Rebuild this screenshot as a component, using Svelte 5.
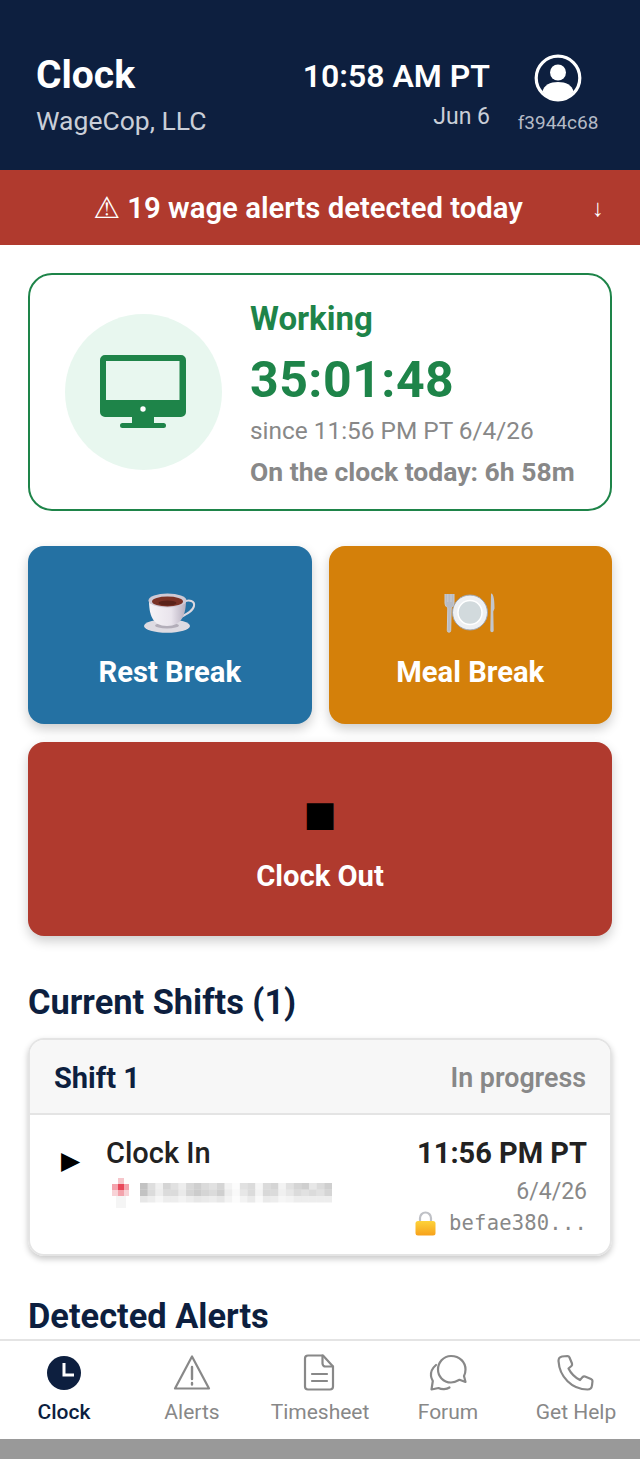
<script>
    const navItems = [
        { label: 'Clock', icon: 'clock', active: true },
        { label: 'Alerts', icon: 'alert' },
        { label: 'Timesheet', icon: 'sheet' },
        { label: 'Forum', icon: 'forum' },
        { label: 'Get Help', icon: 'phone' }
    ];

    // redacted coordinates, drawn as mosaic cells
    const blurShades = [
        [1, 0.55, 0.25, 0.7, 0.5, 0.3, 0.65, 0.8, 0.6, 0.5, 0.7, 0.2, 0.05, 0.5, 0.6, 0.15, 0.6, 0.7, 0.2, 0.5, 0.7, 0.8, 0.4, 0.6, 0.8],
        [1, 0.6, 0.3, 0.6, 0.6, 0.35, 0.7, 0.85, 0.7, 0.6, 0.8, 0.3, 0.1, 0.4, 0.6, 0.2, 0.65, 0.6, 0.25, 0.4, 0.6, 0.5, 0.6, 0.5, 0.7],
        [0.4, 0.3, 0.15, 0.3, 0.3, 0.2, 0.3, 0.4, 0.35, 0.3, 0.4, 0.2, 0.05, 0.2, 0.35, 0.1, 0.35, 0.3, 0.15, 0.2, 0.3, 0.3, 0.3, 0.3, 0.3]
    ];
</script>

<div class="page">
    <header class="topbar">
        <div class="title-block">
            <h1>Clock</h1>
            <p>WageCop, LLC</p>
        </div>
        <div class="time-block">
            <div class="time">10:58 AM PT</div>
            <div class="date">Jun 6</div>
        </div>
        <div class="user-block">
            <svg width="48" height="48" viewBox="0 0 48 48">
                <circle cx="24" cy="24" r="21.8" fill="none" stroke="#fff" stroke-width="3.2" />
                <circle cx="24" cy="18.5" r="8" fill="#fff" />
                <path d="M8.5 37.5C10 31 16 28 24 28s14 3 15.5 9.5A21.5 21.5 0 0 1 24 45.5a21.5 21.5 0 0 1-15.5-8z" fill="#fff" />
            </svg>
            <span>f3944c68</span>
        </div>
    </header>

    <div class="alert-bar">
        <span class="alert-text"><span class="alert-glyph">⚠</span> 19 wage alerts detected today</span>
        <span class="alert-arrow">↓</span>
    </div>

    <main>
        <section class="status-card">
            <div class="status-icon">
                <svg width="86" height="74" viewBox="0 0 86 74">
                    <path fill="#1e8449" fill-rule="evenodd" d="M5 0h76a5 5 0 0 1 5 5v52a5 5 0 0 1-5 5H54v6h9.500a2.500 2.500 0 0 1 0 5h-41a2.500 2.500 0 0 1 0-5H32v-6H5a5 5 0 0 1-5-5V5a5 5 0 0 1 5-5zM6 6v39h73.500V6z" />
                    <circle cx="43" cy="54" r="2.700" fill="#fff" />
                </svg>
            </div>
            <div class="status-text">
                <div class="status-label">Working</div>
                <div class="status-timer">35:01:48</div>
                <div class="status-since">since 11:56 PM PT 6/4/26</div>
                <div class="status-today">On the clock today: 6h 58m</div>
            </div>
        </section>

        <div class="break-row">
            <button class="action rest">
                <svg width="52" height="40" viewBox="0 0 52 40">
                    <defs>
                        <linearGradient id="cupBody" x1="0" x2="1" y1="0" y2="0">
                            <stop offset="0" stop-color="#f6f4f7" />
                            <stop offset="0.6" stop-color="#e9e4ec" />
                            <stop offset="1" stop-color="#b5adbd" />
                        </linearGradient>
                    </defs>
                    <ellipse cx="23" cy="33" rx="23" ry="6.800" fill="#dedbe2" />
                    <ellipse cx="23" cy="32.500" rx="12" ry="3" fill="#b3aeb9" />
                    <path d="M40 9c5-3 11-1 10 4-1 5-7 8-13 11" fill="none" stroke="#dcd8e0" stroke-width="2" />
                    <path d="M5 7c0 14 3 26 18 26s19-12 19-26z" fill="url(#cupBody)" />
                    <ellipse cx="23.500" cy="7.500" rx="19" ry="7" fill="#cfc9d4" />
                    <ellipse cx="23.500" cy="8.500" rx="15.500" ry="5" fill="#7a3226" />
                    <ellipse cx="23.500" cy="10" rx="9" ry="2.500" fill="#5a2219" />
                </svg>
                <span>Rest Break</span>
            </button>
            <button class="action meal">
                <svg width="52" height="40" viewBox="0 0 52 40">
                    <path d="M1 1v9c0 3 1.800 4 2.800 5l-.5 22.500a1.700 1.700 0 0 0 3.400 0L7.200 15c1-1 2.800-2 2.800-5V1M3.800 1v8M7 1v8" fill="#b9bcc4" stroke="#c9ccd3" stroke-width="1" />
                    <circle cx="26" cy="19.500" r="17.500" fill="#eef0f3" stroke="#9ea3ad" stroke-width="1" />
                    <circle cx="26" cy="19.500" r="12" fill="#d2dadd" stroke="#fff" stroke-width="1.500" />
                    <path d="M47 .5c3 0 3.500 8 3.500 15l-1.200 3 .4 19a1.700 1.700 0 0 1-3.400 0z" fill="#c3c6cd" />
                </svg>
                <span>Meal Break</span>
            </button>
        </div>

        <button class="action clock-out">
            <span class="stop">■</span>
            <span>Clock Out</span>
        </button>

        <h2>Current Shifts (1)</h2>
        <section class="shift-card">
            <div class="shift-head">
                <strong>Shift 1</strong>
                <span>In progress</span>
            </div>
            <div class="shift-row">
                <span class="play">▶</span>
                <div class="shift-left">
                    <div class="event">Clock In</div>
                    <svg class="mosaic" width="228" height="34" viewBox="0 0 228 34">
                        <rect x="12" y="0" width="6" height="6" fill="#f6c6cb" />
                        <rect x="6" y="6" width="17" height="6" fill="#f4a3ad" />
                        <rect x="12" y="6" width="6" height="6" fill="#e9485a" />
                        <rect x="6" y="12" width="17" height="6" fill="#f8d3d7" />
                        <rect x="12" y="12" width="6" height="6" fill="#f3a3ac" />
                        <rect x="10" y="18" width="10" height="12" fill="#f5f5f5" />
                        {#each blurShades as row, r}
                            {#each row as shade, c}
                                <rect x={34 + c * 7.680} y={5 + r * 6.500} width="7.680" height="6.500" fill="#9a9a9a" fill-opacity={shade * 0.6} />
                            {/each}
                        {/each}
                    </svg>
                </div>
                <div class="shift-right">
                    <div class="event-time">11:56 PM PT</div>
                    <div class="event-date">6/4/26</div>
                    <div class="event-hash">
                        <svg width="21" height="25" viewBox="0 0 21 25">
                            <defs>
                                <linearGradient id="lockBody" x1="0" x2="0" y1="0" y2="1">
                                    <stop offset="0" stop-color="#fdd33a" />
                                    <stop offset="1" stop-color="#f7a11b" />
                                </linearGradient>
                            </defs>
                            <path d="M5 11V7a5.500 5.500 0 0 1 11 0v4" fill="none" stroke="#bfc1c6" stroke-width="2.200" />
                            <rect x="0.500" y="10" width="20" height="14.500" rx="2.500" fill="url(#lockBody)" />
                        </svg>
                        <span>befae380...</span>
                    </div>
                </div>
            </div>
        </section>

        <h2 class="alerts-title">Detected Alerts</h2>
    </main>

    <nav class="bottom-nav">
        {#each navItems as item}
            <div class="nav-item" class:active={item.active}>
                <svg width="38" height="38" viewBox="0 0 38 38" fill="none" stroke="#888" stroke-width="2.200" stroke-linecap="round" stroke-linejoin="round">
                    {#if item.icon === 'clock'}
                        <circle cx="19" cy="19" r="17" fill="#0d1f3f" stroke="none" />
                        <path d="M19 9v12h10" stroke="#fff" stroke-width="3" stroke-linecap="butt" stroke-linejoin="miter" />
                    {:else if item.icon === 'alert'}
                        <path d="M19 2.500 2 34.500h34z" stroke-width="2.200" />
                        <path d="M19 13v12M19 29v1.500" stroke-width="2.400" />
                    {:else if item.icon === 'sheet'}
                        <path d="M7 1.500h15l10 11v20a3 3 0 0 1-3 3H7a3 3 0 0 1-3-3v-28a3 3 0 0 1 3-3z" />
                        <path d="M21.500 1.500v8a3 3 0 0 0 3 3H32M11 20h15M11 27h15" />
                    {:else if item.icon === 'forum'}
                        <path d="M22 2c9 0 14.500 6.500 14.500 13.500 0 3-.7 5-1.500 6.500l1.500 6-6-2.200C28 27.200 25.500 28.500 22 28.500 14 28.500 9 22 9 15.500S14 2 22 2z" />
                        <path d="M7 11c-3.500 3-5.500 6.500-5 11 .2 2 1 3.500 1.800 5L2.500 35.500l7-1.500c3 1.500 8 1.500 11-.5" />
                    {:else}
                        <path d="M5 2.500 10.500 2c1 0 1.600.5 2 1.500l2.500 6c.3 1 .1 1.800-.6 2.500l-2.900 2.500c2.500 5 6.500 9 11.500 11.500l2.500-2.900c.7-.7 1.500-.9 2.500-.6l6 2.500c1 .4 1.500 1 1.500 2l-.5 4.500c-.3 2.500-2 4-4.500 4C15 35.500 2.500 23 1.500 7c0-2.500 1-4 3.500-4.500z" />
                    {/if}
                </svg>
                <span>{item.label}</span>
            </div>
        {/each}
    </nav>
    <div class="system-bar"></div>
</div>

<style>
    :global(body) {
        margin: 0;
        background: #fff;
    }

    .page {
        height: 1459px;
        display: flex;
        flex-direction: column;
        overflow: hidden;
        font-family: Roboto, "Liberation Sans", sans-serif;
        color: #222;
    }

    .topbar {
        height: 170px;
        box-sizing: border-box;
        flex-shrink: 0;
        display: flex;
        align-items: flex-start;
        background: #0d1f3f;
        color: #fff;
        padding: 52px 42px 0 36px;
    }

    .title-block {
        flex: 1;
    }

    h1 {
        margin: 0;
        font-size: 39px;
        line-height: 46px;
        font-weight: 700;
    }

    .title-block p {
        margin: 6px 0 0;
        font-size: 26.500px;
        line-height: 34px;
        color: #c9ced8;
    }

    .time-block {
        text-align: right;
        margin-right: 28px;
    }

    .time {
        margin-top: 5px;
        font-size: 32px;
        line-height: 38px;
        font-weight: 600;
    }

    .date {
        margin-top: 7px;
        font-size: 23px;
        line-height: 30px;
        color: #c9ced8;
    }

    .user-block {
        width: 80px;
        margin-top: 2px;
        display: flex;
        flex-direction: column;
        align-items: center;
    }

    .user-block span {
        margin-top: 9px;
        font-size: 19px;
        line-height: 24px;
        color: #b4bac6;
    }

    .alert-bar {
        height: 75px;
        box-sizing: border-box;
        padding-right: 24px;
        flex-shrink: 0;
        position: relative;
        display: flex;
        align-items: center;
        justify-content: center;
        background: #b03a2e;
        color: #fff;
    }

    .alert-text {
        font-size: 29.300px;
        font-weight: 600;
    }

    .alert-glyph {
        font-family: "DejaVu Sans", sans-serif;
        font-size: 30px;
        font-weight: 400;
    }

    .alert-arrow {
        position: absolute;
        right: 36px;
        font-size: 24px;
    }

    main {
        flex: 1;
        min-height: 0;
        overflow: hidden;
        padding: 28px 28px 0;
    }

    .status-card {
        height: 238px;
        box-sizing: border-box;
        display: flex;
        align-items: center;
        border: 2px solid #1e8449;
        border-radius: 24px;
        padding: 0 0 0 35px;
    }

    .status-icon {
        width: 157px;
        height: 156px;
        flex-shrink: 0;
        margin-right: 28px;
        border-radius: 50%;
        background: #e8f7ef;
        display: flex;
        align-items: center;
        justify-content: center;
    }

    .status-icon svg {
        margin-right: 2px;
    }

    .status-text {
        padding-top: 3px;
    }

    .status-label {
        font-size: 33px;
        line-height: 38px;
        font-weight: 700;
        color: #1e8449;
    }

    .status-timer {
        margin-top: 13px;
        font-size: 50px;
        line-height: 58px;
        font-weight: 700;
        letter-spacing: 0.500px;
        color: #1e8449;
    }

    .status-since {
        margin-top: 6px;
        font-size: 24.400px;
        line-height: 32px;
        color: #888;
    }

    .status-today {
        margin-top: 9px;
        font-size: 26.500px;
        line-height: 32px;
        font-weight: 700;
        color: #888;
    }

    .break-row {
        display: flex;
        gap: 17px;
        margin-top: 35px;
    }

    .action {
        box-sizing: border-box;
        border: none;
        border-radius: 16px;
        padding: 11px 0 0;
        display: flex;
        flex-direction: column;
        align-items: center;
        justify-content: center;
        color: #fff;
        font-family: inherit;
        font-size: 29.200px;
        font-weight: 700;
        box-shadow: 0 5px 12px rgba(0, 0, 0, 0.2);
    }

    .action span {
        line-height: 34px;
    }

    .rest,
    .meal {
        flex: 1;
        height: 178px;
        gap: 22px;
    }

    .rest {
        background: #2471a3;
    }

    .meal {
        background: #d4800a;
    }

    .clock-out {
        width: 100%;
        height: 194px;
        margin-top: 18px;
        gap: 25px;
        padding-top: 9px;
        background: #b03a2e;
    }

    .action .stop {
        color: #000;
        font-size: 35px;
        line-height: 40px;
        font-family: "DejaVu Sans", sans-serif;
    }

    h2 {
        margin: 46px 0 16px;
        font-size: 34.400px;
        line-height: 40px;
        font-weight: 700;
        color: #0d1f3f;
    }

    .shift-card {
        border: 2px solid #e4e4e4;
        border-radius: 16px;
        overflow: hidden;
        box-shadow: 0 3px 6px rgba(0, 0, 0, 0.22);
    }

    .shift-head {
        height: 75px;
        box-sizing: border-box;
        padding: 2px 24px 0;
        display: flex;
        align-items: center;
        justify-content: space-between;
        background: #f7f7f7;
        border-bottom: 2px solid #e4e4e4;
    }

    .shift-head strong {
        font-size: 29px;
        font-weight: 700;
        color: #0d1f3f;
    }

    .shift-head span {
        font-size: 26.800px;
        font-weight: 600;
        color: #888;
    }

    .shift-row {
        height: 139px;
        box-sizing: border-box;
        display: flex;
        padding: 21px 23px 0 31px;
    }

    .play {
        width: 45px;
        margin-top: 8px;
        font-size: 25px;
        line-height: 34px;
        color: #000;
        font-family: "DejaVu Sans", sans-serif;
    }

    .shift-left {
        flex: 1;
    }

    .event {
        font-size: 29px;
        line-height: 34px;
        font-weight: 500;
    }

    .mosaic {
        display: block;
        margin: 8px 0 0 0;
    }

    .shift-right {
        text-align: right;
    }

    .event-time {
        font-size: 29px;
        line-height: 34px;
        font-weight: 700;
    }

    .event-date {
        margin-top: 7px;
        font-size: 23px;
        line-height: 30px;
        color: #888;
    }

    .event-hash {
        display: flex;
        align-items: center;
        justify-content: flex-end;
        gap: 13px;
        margin-top: 1px;
        font-family: "DejaVu Sans Mono", monospace;
        font-size: 20.500px;
        line-height: 30px;
        letter-spacing: 0.200px;
        color: #888;
    }

    .alerts-title {
        margin-top: 40px;
    }

    .bottom-nav {
        height: 100px;
        box-sizing: border-box;
        flex-shrink: 0;
        display: flex;
        background: #fff;
        border-top: 2px solid #e4e4e4;
        padding-top: 13px;
    }

    .nav-item {
        flex: 1;
        display: flex;
        flex-direction: column;
        align-items: center;
        gap: 7px;
        font-size: 21px;
        line-height: 26px;
        font-weight: 400;
        color: #888;
    }

    .nav-item.active {
        color: #0d1f3f;
        font-weight: 500;
    }

    .system-bar {
        height: 20px;
        flex-shrink: 0;
        background: #999;
    }
</style>
